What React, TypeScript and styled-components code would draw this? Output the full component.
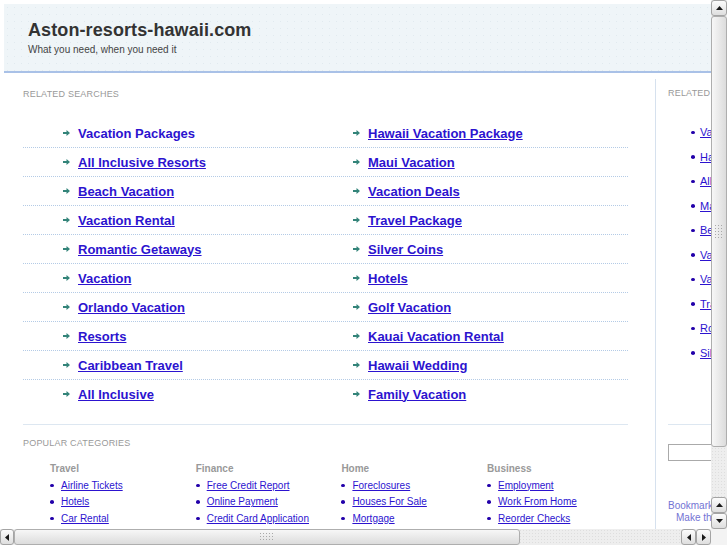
import React from 'react';
import styled, { createGlobalStyle } from 'styled-components';

const GlobalStyle = createGlobalStyle`
  html, body {
    margin: 0;
    padding: 0;
    overflow: hidden;
    background: #fff;
  }
  body {
    font-family: "Liberation Sans", Arial, sans-serif;
  }
`;

const Frame = styled.div`
  display: grid;
  grid-template-columns: 711px 16px;
  grid-template-rows: 529px 16px;
  width: 727px;
  height: 545px;
`;

const Viewport = styled.div`
  overflow: hidden;
  background: #fff;
`;

const Page = styled.div`
  width: 960px;
  padding: 4px 0 0 4px;
`;

const Header = styled.header`
  box-sizing: border-box;
  height: 69px;
  padding: 15px 0 0 24px;
  background-color: #eff5f8;
  background-image: radial-gradient(circle, #e1eaef 0.7px, transparent 0.9px);
  background-size: 7px 7px;
  border-bottom: 2px solid #a9c1e7;
`;

const Title = styled.h1`
  margin: 0;
  font-size: 18px;
  line-height: 22px;
  font-weight: bold;
  color: #333;
  letter-spacing: 0.1px;
`;

const Tagline = styled.div`
  margin-top: 3px;
  font-size: 10px;
  line-height: 12px;
  color: #444;
`;

const Body = styled.div`
  display: flex;
  align-items: flex-start;
`;

const Main = styled.main`
  box-sizing: border-box;
  width: 651px;
  padding: 0 27px 0 19px;
`;

const SectionLabel = styled.div<{ $top: number }>`
  margin-top: ${p => p.$top}px;
  font-size: 9px;
  line-height: 11px;
  color: #999;
  letter-spacing: 0.2px;
  text-transform: uppercase;
  white-space: nowrap;
`;

const SearchList = styled.div`
  margin-top: 19px;
`;

const SearchRow = styled.div<{ $last?: boolean }>`
  box-sizing: border-box;
  height: 29px;
  display: grid;
  grid-template-columns: 290px 1fr;
  padding-left: 40px;
  border-bottom: 1px dotted ${p => (p.$last ? 'transparent' : '#b4cbe6')};
`;

const SearchCell = styled.div`
  display: flex;
  align-items: center;
  gap: 8px;
`;

const SearchLink = styled.a<{ $plain?: boolean }>`
  font-size: 13px;
  font-weight: bold;
  color: #2c13cf;
  text-decoration: ${p => (p.$plain ? 'none' : 'underline')};
`;

const Divider = styled.div<{ $top: number }>`
  margin-top: ${p => p.$top}px;
  height: 1px;
  background: #dde7f1;
`;

const Categories = styled.div`
  display: grid;
  grid-template-columns: repeat(4, 145.7px);
  padding-left: 27px;
  margin-top: 14px;
`;

const CatTitle = styled.div`
  font-size: 10px;
  line-height: 12px;
  font-weight: bold;
  color: #999;
  margin-bottom: 2px;
`;

const CatItem = styled.div`
  display: flex;
  align-items: center;
  gap: 7px;
  height: 16.5px;
`;

const Bullet = styled.span`
  width: 4px;
  height: 3.5px;
  border-radius: 50%;
  background: #2200aa;
  flex-shrink: 0;
`;

const SmallLink = styled.a<{ $size: number }>`
  font-size: ${p => p.$size}px;
  color: #2c13cf;
  text-decoration: underline;
  white-space: nowrap;
`;

const Sidebar = styled.aside`
  margin-top: 6px;
  width: 290px;
  padding: 0 0 60px 12px;
  border-left: 1px solid #d6e1ee;
`;

const SideList = styled.div`
  margin-top: 21px;
  padding-left: 23px;
`;

const SideItem = styled.div`
  display: flex;
  align-items: center;
  gap: 5px;
  height: 24.5px;
`;

const SearchBox = styled.input`
  display: block;
  box-sizing: border-box;
  margin-top: 19px;
  width: 150px;
  height: 17px;
  border: 1px solid #aaa;
  padding: 0;
`;

const Bookmarks = styled.div`
  margin-top: 39px;
`;

const BookmarkLink = styled.a<{ $indent: number }>`
  display: block;
  margin-left: ${p => p.$indent}px;
  font-size: 10px;
  line-height: 12px;
  color: #7373d4;
  text-decoration: none;
  white-space: nowrap;
`;

/* scrollbars */

const VBar = styled.div`
  display: flex;
  flex-direction: column;
  background: #eeeeee;
  background-image: radial-gradient(circle, #dedede 0.6px, transparent 0.8px);
  background-size: 3px 3px;
`;

const HBar = styled(VBar)`
  flex-direction: row;
`;

const Corner = styled.div`
  background: #f3f3f3;
`;

const Spacer = styled.div`
  flex: 1;
`;

const ArrowButton = styled.div<{ $w: number }>`
  box-sizing: border-box;
  width: ${p => p.$w}px;
  height: 16px;
  flex-shrink: 0;
  display: flex;
  align-items: center;
  justify-content: center;
  border: 1px solid #a4a4a4;
  border-radius: 3px;
  background: linear-gradient(#fcfcfc, #dedede);
`;

const Thumb = styled.div<{ $vertical?: boolean; $len: number }>`
  box-sizing: border-box;
  flex-shrink: 0;
  display: flex;
  align-items: center;
  justify-content: center;
  border: 1px solid #aeaeae;
  border-radius: 3px;
  ${p => (p.$vertical ? `height: ${p.$len}px;` : `width: ${p.$len}px;`)}
  background: ${p =>
    p.$vertical
      ? 'linear-gradient(90deg, #f7f7f7, #dcdcdc)'
      : 'linear-gradient(#f7f7f7, #dcdcdc)'};
`;

const Grip = styled.div<{ $w: number; $h: number }>`
  width: ${p => p.$w}px;
  height: ${p => p.$h}px;
  background-image: radial-gradient(circle, #a8a8a8 0.7px, transparent 0.9px);
  background-size: 3px 3px;
`;

const Tri = ({ dir }: { dir: 'up' | 'down' | 'left' | 'right' }) => {
  const pts = {
    up: '0,4 7,4 3.5,0',
    down: '0,0 7,0 3.5,4',
    left: '4,0 4,7 0,3.5',
    right: '0,0 0,7 4,3.5',
  }[dir];
  const vert = dir === 'up' || dir === 'down';
  return (
    <svg width={vert ? 7 : 4} height={vert ? 4 : 7} viewBox={vert ? '0 0 7 4' : '0 0 4 7'}>
      <polygon points={pts} fill="#1a1a1a" />
    </svg>
  );
};

const Arrow = () => (
  <svg width="7" height="6" viewBox="0 0 7 6">
    <path d="M0 2h3.5V0L7 3 3.5 6V4H0z" fill="#338479" />
  </svg>
);

const searches: [string, string][] = [
  ['Vacation Packages', 'Hawaii Vacation Package'],
  ['All Inclusive Resorts', 'Maui Vacation'],
  ['Beach Vacation', 'Vacation Deals'],
  ['Vacation Rental', 'Travel Package'],
  ['Romantic Getaways', 'Silver Coins'],
  ['Vacation', 'Hotels'],
  ['Orlando Vacation', 'Golf Vacation'],
  ['Resorts', 'Kauai Vacation Rental'],
  ['Caribbean Travel', 'Hawaii Wedding'],
  ['All Inclusive', 'Family Vacation'],
];

const categories = [
  { title: 'Travel', items: ['Airline Tickets', 'Hotels', 'Car Rental'] },
  { title: 'Finance', items: ['Free Credit Report', 'Online Payment', 'Credit Card Application'] },
  { title: 'Home', items: ['Foreclosures', 'Houses For Sale', 'Mortgage'] },
  { title: 'Business', items: ['Employment', 'Work From Home', 'Reorder Checks'] },
];

const sideLinks = [
  'Vacation Packages',
  'Hawaii Vacation Package',
  'All Inclusive Resorts',
  'Maui Vacation',
  'Beach Vacation',
  'Vacation Deals',
  'Vacation Rental',
  'Travel Package',
  'Romantic Getaways',
  'Silver Coins',
];

export default function App() {
  return (
    <>
      <GlobalStyle />
      <Frame>
        <Viewport>
          <Page>
            <Header>
              <Title>Aston-resorts-hawaii.com</Title>
              <Tagline>What you need, when you need it</Tagline>
            </Header>
            <Body>
              <Main>
                <SectionLabel $top={16}>Related Searches</SectionLabel>
                <SearchList>
                  {searches.map((pair, i) => (
                    <SearchRow key={i} $last={i === searches.length - 1}>
                      {pair.map((label, j) => (
                        <SearchCell key={j}>
                          <Arrow />
                          <SearchLink href="#" $plain={i === 0 && j === 0}>
                            {label}
                          </SearchLink>
                        </SearchCell>
                      ))}
                    </SearchRow>
                  ))}
                </SearchList>
                <Divider $top={15} />
                <SectionLabel $top={13}>Popular Categories</SectionLabel>
                <Categories>
                  {categories.map(cat => (
                    <div key={cat.title}>
                      <CatTitle>{cat.title}</CatTitle>
                      {cat.items.map(item => (
                        <CatItem key={item}>
                          <Bullet />
                          <SmallLink href="#" $size={10}>
                            {item}
                          </SmallLink>
                        </CatItem>
                      ))}
                    </div>
                  ))}
                </Categories>
              </Main>
              <Sidebar>
                <SectionLabel $top={9}>Related Searches</SectionLabel>
                <SideList>
                  {sideLinks.map(label => (
                    <SideItem key={label}>
                      <Bullet />
                      <SmallLink href="#" $size={11}>
                        {label}
                      </SmallLink>
                    </SideItem>
                  ))}
                </SideList>
                <Divider $top={59} />
                <SearchBox type="text" />
                <Bookmarks>
                  <BookmarkLink href="#" $indent={0}>Bookmark this page</BookmarkLink>
                  <BookmarkLink href="#" $indent={8}>Make this your Homepage</BookmarkLink>
                </Bookmarks>
              </Sidebar>
            </Body>
          </Page>
        </Viewport>
        <VBar>
          <ArrowButton $w={16}>
            <Tri dir="up" />
          </ArrowButton>
          <Thumb $vertical $len={431}>
            <Grip $w={10} $h={16} />
          </Thumb>
          <Spacer />
          <ArrowButton $w={16}>
            <Tri dir="up" />
          </ArrowButton>
          <ArrowButton $w={16}>
            <Tri dir="down" />
          </ArrowButton>
        </VBar>
        <HBar>
          <ArrowButton $w={14}>
            <Tri dir="left" />
          </ArrowButton>
          <Thumb $len={506}>
            <Grip $w={16} $h={10} />
          </Thumb>
          <Spacer />
          <ArrowButton $w={15}>
            <Tri dir="left" />
          </ArrowButton>
          <ArrowButton $w={15}>
            <Tri dir="right" />
          </ArrowButton>
        </HBar>
        <Corner />
      </Frame>
    </>
  );
}
